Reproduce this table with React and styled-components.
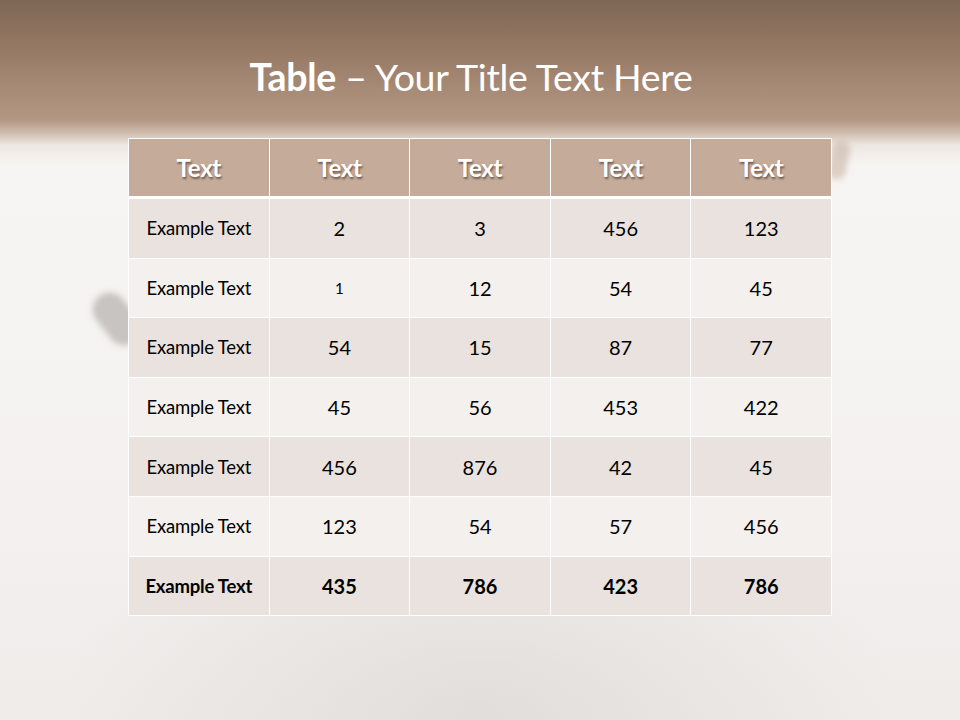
import styled, { createGlobalStyle } from 'styled-components'

const GlobalStyle = createGlobalStyle`
  html, body {
    margin: 0;
    padding: 0;
  }
  body {
    font-family: Lato, "Open Sans", "Liberation Sans", sans-serif;
  }
`

const Slide = styled.div`
  position: relative;
  width: 960px;
  height: 720px;
  overflow: hidden;
  background:
    radial-gradient(ellipse 420px 260px at 480px 720px, rgba(200, 194, 189, 0.35), rgba(200, 194, 189, 0) 100%),
    linear-gradient(
      to bottom,
      #7d6754 0px,
      #917561 40px,
      #a88b76 90px,
      #b49783 120px,
      #cdb9aa 132px,
      #ede7e2 145px,
      #f7f5f3 165px,
      #f5f3f1 400px,
      #efecea 720px
    );
  display: flex;
  flex-direction: column;
  align-items: center;
`

const Smudge = styled.div`
  position: absolute;
  left: ${p => p.$x}px;
  top: ${p => p.$y}px;
  width: ${p => p.$w}px;
  height: ${p => p.$h}px;
  border-radius: 20px;
  background: ${p => p.$c};
  filter: blur(3px);
  transform: rotate(${p => p.$r}deg);
`

const Title = styled.h1`
  margin: 0;
  height: 138px;
  display: flex;
  align-items: center;
  justify-content: center;
  padding-top: 14px;
  padding-right: 18px;
  box-sizing: border-box;
  color: #ffffff;
  font-size: 37.5px;
  font-weight: 400;
  letter-spacing: -0.3px;

  b {
    font-weight: 700;
  }
`

const Table = styled.div`
  position: relative;
  width: 704px;
  display: grid;
  grid-template-columns: repeat(5, 1fr);
  background: #ffffff;
  column-gap: 1px;
  row-gap: 1px;
  padding: 1px;
  box-sizing: border-box;
`

const HeadCell = styled.div`
  height: 57px;
  margin-bottom: 2px;
  display: flex;
  align-items: center;
  justify-content: center;
  background: #c5ab99;
  color: #ffffff;
  font-size: 24px;
  font-weight: 700;
  letter-spacing: -0.3px;
  text-shadow: 1px 2px 2px rgba(60, 40, 30, 0.6);
`

const Cell = styled.div`
  height: 58.6px;
  display: flex;
  align-items: center;
  justify-content: center;
  background: ${p => (p.$odd ? '#e9e2de' : '#f4f0ed')};
  color: #000000;
  font-size: ${p => (p.$label ? '18.5px' : p.$small ? '15px' : '20px')};
  font-weight: ${p => (p.$bold ? 700 : 400)};
  letter-spacing: ${p => (p.$label ? '-0.2px' : '0')};
`

const header = ['Text', 'Text', 'Text', 'Text', 'Text']

const rows = [
  ['Example Text', '2', '3', '456', '123'],
  ['Example Text', '1', '12', '54', '45'],
  ['Example Text', '54', '15', '87', '77'],
  ['Example Text', '45', '56', '453', '422'],
  ['Example Text', '456', '876', '42', '45'],
  ['Example Text', '123', '54', '57', '456'],
  ['Example Text', '435', '786', '423', '786'],
]

const App = () => {
  return (
    <>
      <GlobalStyle />
      <Slide>
        <Smudge $x={100} $y={290} $w={34} $h={58} $r={-38} $c="rgba(170, 164, 160, 0.6)" />
        <Smudge $x={830} $y={140} $w={18} $h={40} $r={12} $c="rgba(200, 180, 165, 0.6)" />
        <Title>
          <span><b>Table</b> – Your Title Text Here</span>
        </Title>
        <Table>
          {header.map((h, i) => (
            <HeadCell key={'h' + i}>{h}</HeadCell>
          ))}
          {rows.map((row, r) =>
            row.map((value, c) => (
              <Cell
                key={r + '-' + c}
                $odd={r % 2 === 0}
                $label={c === 0}
                $small={r === 1 && c === 1}
                $bold={r === rows.length - 1}
              >
                {value}
              </Cell>
            ))
          )}
        </Table>
      </Slide>
    </>
  )
}

export default App
